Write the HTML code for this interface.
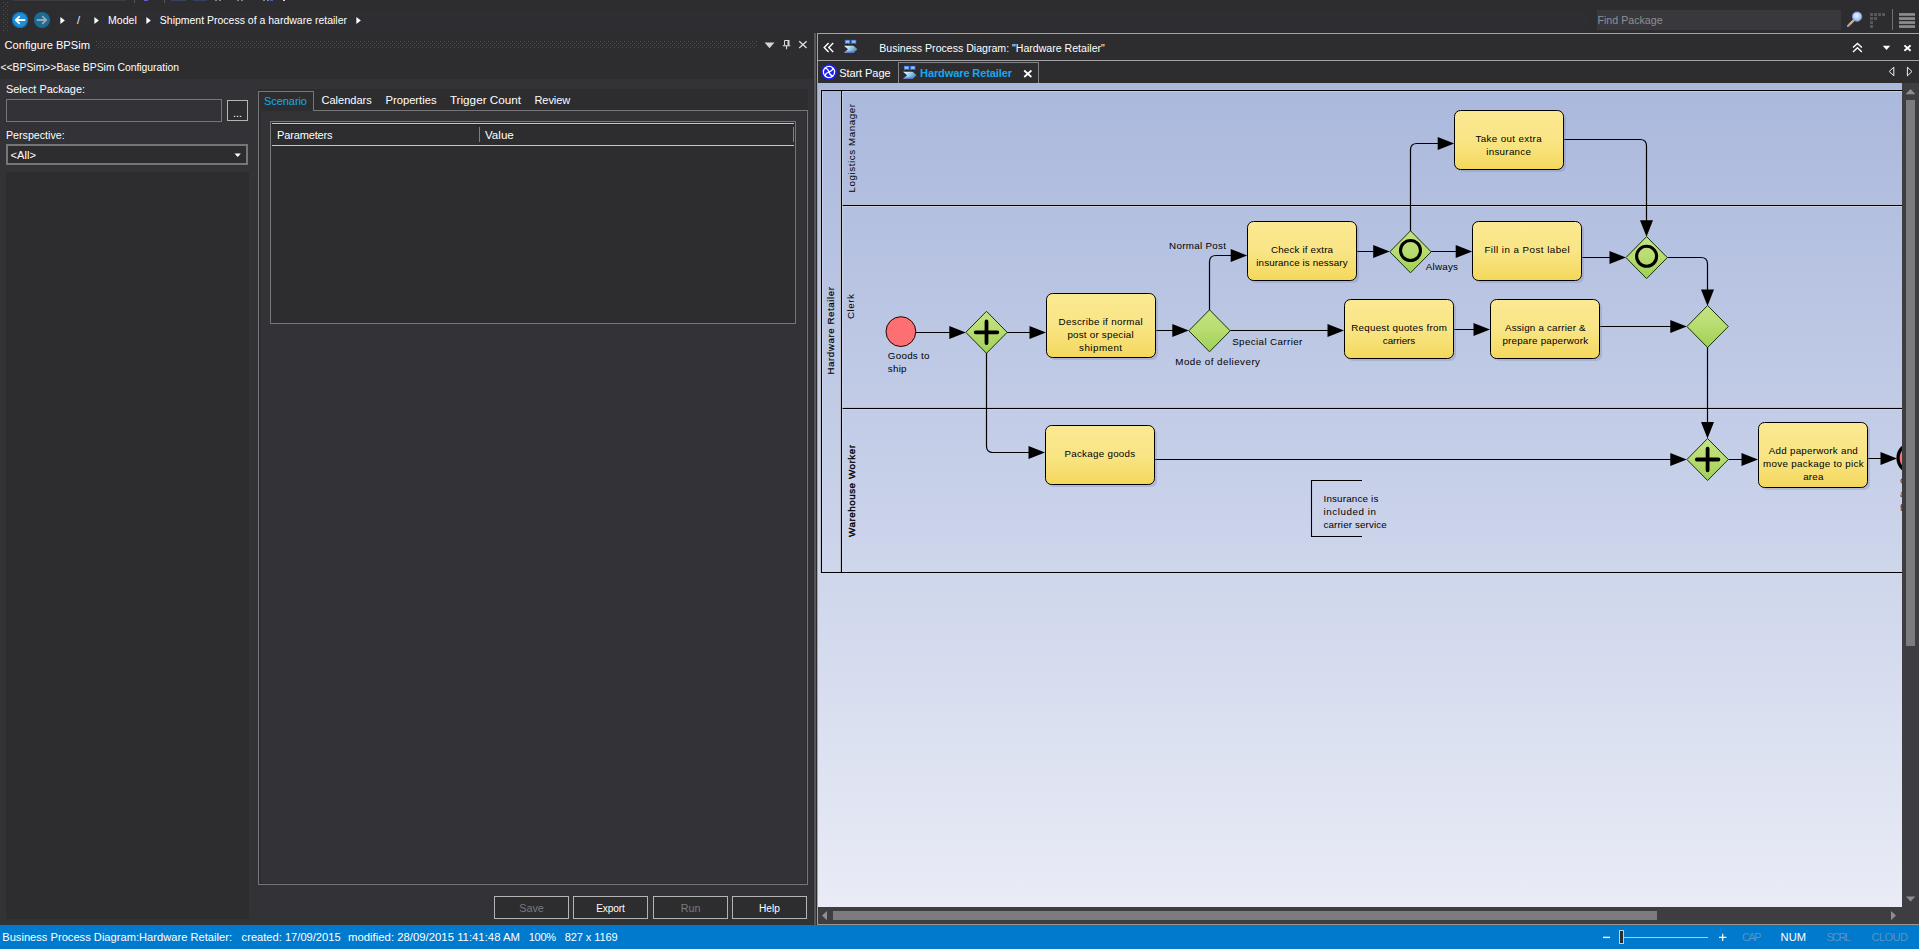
<!DOCTYPE html>
<html><head><meta charset="utf-8"><title>EA</title>
<style>
html,body{margin:0;padding:0}
body{width:1919px;height:949px;overflow:hidden;background:#2d2d30;font-family:"Liberation Sans",sans-serif;position:relative}
.a{position:absolute;box-sizing:border-box}
.t{position:absolute;white-space:pre;font-family:"Liberation Sans",sans-serif}
svg{position:absolute;overflow:hidden}
svg text{font-family:"Liberation Sans",sans-serif}
</style></head><body>
<div class="a" style="left:13px;top:0px;width:113px;height:1px;background:#3c3c40"></div>
<div class="a" style="left:134px;top:0px;width:1px;height:3px;background:#55555a"></div>
<div class="a" style="left:164px;top:0px;width:1px;height:3px;background:#55555a"></div>
<div class="a" style="left:144px;top:0px;width:4px;height:1px;background:#6a5acd"></div>
<div class="a" style="left:171px;top:0px;width:15px;height:1px;background:#36425e"></div>
<div class="a" style="left:193px;top:0px;width:14px;height:1px;background:#36425e"></div>
<div class="a" style="left:215px;top:0px;width:2px;height:1px;background:#85858c"></div>
<div class="a" style="left:219px;top:0px;width:2px;height:1px;background:#85858c"></div>
<div class="a" style="left:237px;top:0px;width:2px;height:1px;background:#85858c"></div>
<div class="a" style="left:241px;top:0px;width:2px;height:1px;background:#85858c"></div>
<div class="a" style="left:263px;top:0px;width:2px;height:1px;background:#85858c"></div>
<div class="a" style="left:267px;top:0px;width:2px;height:1px;background:#85858c"></div>
<div class="a" style="left:270px;top:0px;width:3px;height:1px;background:#3f5fc4"></div>
<div class="a" style="left:283px;top:0px;width:2px;height:1px;background:#ddd"></div>
<svg style="left:3px;top:2px" width="6" height="29"><defs><pattern id="gp" width="4" height="4" patternUnits="userSpaceOnUse"><rect x="0" y="0" width="1" height="1" fill="#4c4c50"/><rect x="2" y="2" width="1" height="1" fill="#4c4c50"/></pattern></defs><rect width="6" height="29" fill="url(#gp)"/></svg>
<svg style="left:10px;top:10px" width="44" height="20" viewBox="10 10 44 20">
<circle cx="20" cy="20" r="8" fill="#1b8fd8"/><circle cx="20" cy="20" r="7.5" fill="none" stroke="#0e6fb0" stroke-width="1"/>
<path d="M24.5 20H16M19.3 16.6L15.8 20l3.5 3.4" fill="none" stroke="#fff" stroke-width="1.8" stroke-linecap="round" stroke-linejoin="round"/>
<circle cx="42" cy="20" r="8" fill="#1c6a96"/>
<path d="M37.5 20H46M42.7 16.6L46.2 20l-3.5 3.4" fill="none" stroke="#9aa7b0" stroke-width="1.8" stroke-linecap="round" stroke-linejoin="round"/>
</svg>
<div class="a" style="left:57px;top:11px;width:1532px;height:19px;background:#2e2e32"></div>
<svg style="left:60.1px;top:16px" width="6" height="9"><path d="M0.4 1L4.8 4.5L0.4 8z" fill="#fff"/></svg>
<svg style="left:94.0px;top:16px" width="6" height="9"><path d="M0.4 1L4.8 4.5L0.4 8z" fill="#fff"/></svg>
<svg style="left:146.1px;top:16px" width="6" height="9"><path d="M0.4 1L4.8 4.5L0.4 8z" fill="#fff"/></svg>
<svg style="left:356.0px;top:16px" width="6" height="9"><path d="M0.4 1L4.8 4.5L0.4 8z" fill="#fff"/></svg>
<div class="a" style="left:1597px;top:10px;width:244px;height:20px;background:#38383d"></div>
<svg style="left:1844px;top:8px" width="74" height="24" viewBox="1844 8 74 24">
<defs><linearGradient id="hG" x1="0" y1="1" x2="1" y2="0"><stop offset="0" stop-color="#9c8cd0"/><stop offset="0.5" stop-color="#d2b282"/><stop offset="1" stop-color="#caa870"/></linearGradient>
<radialGradient id="lG" cx="0.45" cy="0.4" r="0.6"><stop offset="0" stop-color="#eaf4ff"/><stop offset="0.7" stop-color="#a9c8f4"/><stop offset="1" stop-color="#8f9fe8"/></radialGradient></defs>
<path d="M1848 26L1853.8 20.2" stroke="url(#hG)" stroke-width="2.4" stroke-linecap="round"/>
<circle cx="1857.1" cy="16.6" r="4.7" fill="url(#lG)" stroke="#8c94e0" stroke-width="0.8"/>
<g fill="#55555a"><rect x="1870" y="13" width="3" height="3"/><rect x="1874" y="13" width="3" height="3"/><rect x="1878" y="13" width="3" height="3"/><rect x="1882" y="13" width="3" height="3"/><rect x="1870" y="17" width="3" height="3"/><rect x="1874" y="17" width="3" height="3"/><rect x="1870" y="21" width="3" height="3"/><rect x="1870" y="25" width="3" height="3"/></g>
<rect x="1892" y="9" width="1" height="21" fill="#707074"/>
<g fill="#8c8c8e"><rect x="1899" y="13.1" width="16" height="2.7"/><rect x="1899" y="17.2" width="16" height="2.7"/><rect x="1899" y="21.2" width="16" height="2.7"/><rect x="1899" y="25.2" width="16" height="2.7"/></g>
</svg>
<svg style="left:96px;top:41px" width="662" height="7"><defs><pattern id="gp2" width="4" height="4" patternUnits="userSpaceOnUse"><rect x="0" y="0" width="1" height="1" fill="#505055"/><rect x="2" y="2" width="1" height="1" fill="#505055"/></pattern></defs><rect width="662" height="7" fill="url(#gp2)"/></svg>
<svg style="left:760px;top:36px" width="52" height="18" viewBox="760 36 52 18">
<path d="M764.6 42.6h9.8l-4.9 5.6z" fill="#d4d4d4"/>
<path d="M784.5 45.3V40.5H789" stroke="#d8d8d8" stroke-width="1" fill="none"/><rect x="787.5" y="40" width="2" height="5.4" fill="#d8d8d8"/>
<rect x="782.8" y="45.2" width="7.4" height="1.1" fill="#d8d8d8"/><rect x="786" y="46" width="1.1" height="3.2" fill="#d8d8d8"/>
<path d="M799.2 41.2l7.4 6.8M806.6 41.2l-7.4 6.8" stroke="#dcdcdc" stroke-width="1.35" fill="none"/>
</svg>
<div class="a" style="left:0px;top:79px;width:813px;height:846px;background:#333337"></div>
<div class="a" style="left:6px;top:99px;width:216px;height:23px;background:#333337;border:1px solid #767679"></div>
<div class="a" style="left:227px;top:100px;width:21px;height:21px;background:#2d2d30;border:1px solid #b4b4b6"></div>
<div class="a" style="left:6px;top:144px;width:242px;height:21px;background:#2d2d30;border:2px solid #767679"></div>
<svg style="left:234.3px;top:152.8px" width="8" height="5"><path d="M0.5 0.5h6.4l-3.2 3.4z" fill="#fff"/></svg>
<div class="a" style="left:6px;top:172px;width:243px;height:747px;background:#2d2d30"></div>
<div class="a" style="left:258px;top:89px;width:550px;height:22px;background:#2d2d30"></div>
<div class="a" style="left:258px;top:110px;width:550px;height:775px;background:#2d2d30;border:1px solid #767679"></div>
<div class="a" style="left:261px;top:111px;width:545px;height:772px;background:#333337"></div>
<div class="a" style="left:258px;top:91px;width:56px;height:20px;background:#2d2d30;border:1px solid #767679;border-bottom:none"></div>
<div class="a" style="left:259px;top:110px;width:54px;height:1px;background:#2d2d30"></div>
<div class="a" style="left:270px;top:121px;width:526px;height:203px;background:#2d2d30;border:1px solid #767679"></div>
<div class="a" style="left:272px;top:123px;width:522px;height:1px;background:#c6c6c8"></div>
<div class="a" style="left:272px;top:124px;width:522px;height:1px;background:#262628"></div>
<div class="a" style="left:272px;top:145px;width:522px;height:1px;background:#c6c6c8"></div>
<div class="a" style="left:479px;top:127px;width:1px;height:15px;background:#808084"></div>
<div class="a" style="left:793px;top:127px;width:1px;height:15px;background:#808084"></div>
<div class="a" style="left:494px;top:896px;width:75px;height:23px;background:#2d2d30;border:1px solid #b4b4b6"></div>
<div class="a" style="left:573px;top:896px;width:75px;height:23px;background:#2d2d30;border:1px solid #b4b4b6"></div>
<div class="a" style="left:653px;top:896px;width:75px;height:23px;background:#2d2d30;border:1px solid #b4b4b6"></div>
<div class="a" style="left:732px;top:896px;width:75px;height:23px;background:#2d2d30;border:1px solid #b4b4b6"></div>
<div class="a" style="left:814px;top:33px;width:2px;height:892px;background:#58585c"></div>
<div class="a" style="left:817px;top:33px;width:1102px;height:892px;background:#2d2d30;border-left:1px solid #a4a4a6;border-top:1px solid #a4a4a6"></div>
<div class="a" style="left:818px;top:60px;width:1101px;height:1px;background:#a4a4a6"></div>
<svg style="left:820px;top:38px" width="44" height="20" viewBox="820 38 44 20">
<defs><linearGradient id="icG" x1="0" y1="0" x2="1" y2="0.5"><stop offset="0" stop-color="#ffffff"/><stop offset="0.45" stop-color="#a8dcf4"/><stop offset="1" stop-color="#4f8fb8"/></linearGradient></defs>
<path d="M828.6 43l-4.4 4.55 4.4 4.55M833.2 43l-4.4 4.55 4.4 4.55" fill="none" stroke="#fff" stroke-width="1.4"/>
<g id="dicon"><rect x="844.9" y="39.9" width="5.3" height="3.8" fill="#4f86ee"/><rect x="851.2" y="39.9" width="5" height="3.8" fill="#4f86ee"/><rect x="846" y="40.9" width="3" height="1.8" fill="#9fd0f8"/><rect x="852.2" y="40.9" width="3" height="1.8" fill="#9fd0f8"/>
<rect x="847" y="43.7" width="1" height="2" fill="#1c1c30"/><rect x="853.2" y="43.7" width="1" height="2" fill="#1c1c30"/>
<path d="M844 45.7H853.6L857.4 49.2L853.6 52.7H844L848 49.2z" fill="url(#icG)"/><path d="M844 52.7H853.6L855 51.4H846z" fill="#6a6ad8"/></g>
</svg>
<svg style="left:1845px;top:38px" width="72" height="42" viewBox="1845 38 72 42">
<path d="M1853 47.6l4.45-4.2 4.45 4.2M1853 52l4.45-4.2 4.45 4.2" fill="none" stroke="#fff" stroke-width="1.4"/>
<path d="M1882.8 45.7h7.4l-3.7 4.3z" fill="#fff"/>
<path d="M1904.4 45.4l6.2 5.4M1910.6 45.4l-6.2 5.4" stroke="#fff" stroke-width="1.9"/>
<path d="M1893.8 67.2l-4.6 4.3 4.6 4.3z" fill="none" stroke="#f0f0f0" stroke-width="1"/>
<path d="M1907.4 67.2l4.6 4.3-4.6 4.3z" fill="none" stroke="#f0f0f0" stroke-width="1"/>
</svg>
<div class="a" style="left:898px;top:62px;width:141px;height:21px;background:#2d2d30;border:1px solid #848488;border-bottom:none"></div>
<svg style="left:820px;top:63px" width="100" height="19" viewBox="820 63 100 19">
<circle cx="829" cy="72" r="8" fill="#1c1cf4"/>
<g fill="none" stroke="#fff" stroke-width="1.25"><circle cx="829" cy="72" r="5.6"/>
<path d="M825 68c2.5 0.5 3.5 2 4 4s1.500 3.500 4 4M833 68c-0.500 2.500-2 3.500-4 4s-3.500 1.500-4 4"/></g>
<g transform="translate(59.1 26)"><g><rect x="844.9" y="39.9" width="5.3" height="3.8" fill="#4f86ee"/><rect x="851.2" y="39.9" width="5" height="3.8" fill="#4f86ee"/><rect x="846" y="40.9" width="3" height="1.8" fill="#9fd0f8"/><rect x="852.2" y="40.9" width="3" height="1.8" fill="#9fd0f8"/>
<rect x="847" y="43.7" width="1" height="2" fill="#1c1c30"/><rect x="853.2" y="43.7" width="1" height="2" fill="#1c1c30"/>
<path d="M844 45.7H853.6L857.4 49.2L853.6 52.7H844L848 49.2z" fill="url(#icG)"/><path d="M844 52.7H853.6L855 51.4H846z" fill="#6a6ad8"/></g></g>
</svg>
<svg style="left:1022px;top:68px" width="12" height="12" viewBox="0 0 12 12"><path d="M2.2 2.5l7.2 6.500M9.4 2.5L2.2 9" stroke="#fff" stroke-width="1.7"/></svg>
<div class="a" style="left:1902px;top:83px;width:17px;height:824px;background:#3e3e42"></div>
<div class="a" style="left:1906px;top:100px;width:9px;height:546px;background:#7c7c7e"></div>
<div class="a" style="left:818px;top:907px;width:1101px;height:18px;background:#3e3e42"></div>
<div class="a" style="left:833px;top:911px;width:824px;height:9px;background:#7c7c7e"></div>
<svg style="left:818px;top:82px" width="1101" height="843" viewBox="818 82 1101 843">
<path d="M1905.6 94.2l4.9-5.200 4.9 5.200z" fill="#8e8e90"/><path d="M1906 896.5l4.6 5 4.6-5z" fill="#8e8e90"/>
<path d="M827 911l-5 4.6 5 4.6z" fill="#8e8e90"/><path d="M1891 911l5 4.6-5 4.6z" fill="#8e8e90"/>
</svg>
<div class="a" style="left:0px;top:925px;width:1919px;height:24px;background:#007acc"></div>
<div class="a" style="left:817px;top:924px;width:1102px;height:1px;background:#a09488"></div>
<svg style="left:1600px;top:927px" width="130" height="20" viewBox="1600 927 130 20">
<rect x="1603" y="936.7" width="7" height="1.4" fill="#fff"/>
<rect x="1624" y="937" width="84" height="1" fill="#cfc6bc"/>
<rect x="1619.500" y="930.5" width="4" height="13" fill="#2d2d30" stroke="#d6c8ba" stroke-width="1"/>
<path d="M1719 937.4h7.4M1722.7 933.7v7.4" stroke="#fff" stroke-width="1.2"/>
</svg>
<svg style="left:818px;top:83px" width="1084" height="824" viewBox="818 83 1084 824">
<defs>
<linearGradient id="bgG" x1="0" y1="0" x2="0" y2="1"><stop offset="0" stop-color="#aab8dc"/><stop offset="0.5" stop-color="#c8d1e9"/><stop offset="1" stop-color="#e9ecf6"/></linearGradient>
<linearGradient id="tG" x1="0" y1="0" x2="0" y2="1"><stop offset="0" stop-color="#fbe992"/><stop offset="0.5" stop-color="#f9e586"/><stop offset="1" stop-color="#f4d85c"/></linearGradient>
<linearGradient id="gG" x1="0" y1="0" x2="0" y2="1"><stop offset="0" stop-color="#c4e283"/><stop offset="0.45" stop-color="#b9dd72"/><stop offset="1" stop-color="#9fd055"/></linearGradient>
</defs>
<rect x="818" y="83" width="1085" height="824" fill="url(#bgG)"/>
<g fill="none" stroke="#bebec2" stroke-width="1" shape-rendering="crispEdges"><path d="M820.5 90V573M840.5 90V572M820 89.5H1910M841 204.5H1910M841 407.5H1910"/></g>
<g fill="none" stroke="#000" stroke-width="1" shape-rendering="crispEdges"><path d="M1910 90.5H821.5V572.5H1910"/><path d="M841.5 90V573"/><path d="M840.5 205.5H1910M840.5 408.5H1910"/></g>
<g fill="none" stroke="#cfdaf6" stroke-width="1" shape-rendering="crispEdges" opacity="0.6"><path d="M822.5 91V572M842.5 91V572M842 91.5H1910M842 206.5H1910M842 409.5H1910M821 573.5H1910"/></g>
<text transform="translate(834.3 374.5) rotate(-90)" font-size="9.8" font-weight="400" stroke="#000" stroke-width="0.15" textLength="87.5" lengthAdjust="spacing" fill="#000">Hardware Retailer</text>
<text transform="translate(854.7 192.4) rotate(-90)" font-size="9.8" font-weight="400" textLength="88.4" lengthAdjust="spacing" fill="#000">Logistics Manager</text>
<text transform="translate(854.3 319.0) rotate(-90)" font-size="9.8" font-weight="400" textLength="25.0" lengthAdjust="spacing" fill="#000">Clerk</text>
<text transform="translate(854.6 537.0) rotate(-90)" font-size="9.8" font-weight="400" stroke="#000" stroke-width="0.35" textLength="92.0" lengthAdjust="spacing" fill="#000">Warehouse Worker</text>
<path d="M916 332.5H950.3M1007 332.5H1030.5M1156 330.5H1173.3M1230.2 330.5H1328.5M1357 251.5H1374.2M1431 251.5H1456.7M1582 257.5H1610.5M1454 329.5H1474.5M1600 326.5H1671.3M1155 459.5H1671.3M1728.5 459.5H1742.5M1868 458.5H1881.5M1209.5 310V262.0Q1209.5 255.5 1216.0 255.5H1231.7M1410.5 231V150.0Q1410.5 143.5 1417.0 143.5H1438.7M986.5 353V446.0Q986.5 452.5 993.0 452.5H1029.5M1564 139.5H1640.0Q1646.5 139.5 1646.5 146.0V221.3M1667.3 257.5H1701.0Q1707.5 257.5 1707.5 264.0V290.5M1707.5 347V423.1" fill="none" stroke="#000" stroke-width="1.2"/>
<path d="M965.8 332.5L949.3 326.0V339.0zM1046 332.5L1029.5 326.0V339.0zM1188.8 330.5L1172.3 324.0V337.0zM1344 330.5L1327.5 324.0V337.0zM1389.7 251.5L1373.2 245.0V258.0zM1472.2 251.5L1455.7 245.0V258.0zM1626 257.5L1609.5 251.0V264.0zM1490 329.5L1473.5 323.0V336.0zM1686.8 326.5L1670.3 320.0V333.0zM1686.8 459.5L1670.3 453.0V466.0zM1758 459.5L1741.5 453.0V466.0zM1897 458.5L1880.5 452.0V465.0zM1247.2 255.5L1230.7 249.0V262.0zM1454.2 143.5L1437.7 137.0V150.0zM1045 452.5L1028.5 446.0V459.0zM1646.5 236.8L1640.0 220.3H1653.0zM1707.5 306L1701.0 289.5H1714.0zM1707.5 438.6L1701.0 422.1H1714.0z" fill="#000"/>
<rect x="1457" y="113" width="109" height="59" rx="6" fill="#7c84a6" opacity="0.30"/>
<rect x="1454.5" y="110.5" width="109" height="59" rx="6" fill="url(#tG)" stroke="#000" stroke-width="1"/>
<text x="1475.4" y="142.0" font-size="9.8" fill="#000" textLength="66.3" lengthAdjust="spacing">Take out extra</text>
<text x="1486.2" y="155.0" font-size="9.8" fill="#000" textLength="44.8" lengthAdjust="spacing">insurance</text>
<rect x="1250" y="224" width="109" height="59" rx="6" fill="#7c84a6" opacity="0.30"/>
<rect x="1247.5" y="221.5" width="109" height="59" rx="6" fill="url(#tG)" stroke="#000" stroke-width="1"/>
<text x="1271.0" y="253.0" font-size="9.8" fill="#000" textLength="62" lengthAdjust="spacing">Check if extra</text>
<text x="1256.3" y="266.0" font-size="9.8" fill="#000" textLength="91.3" lengthAdjust="spacing">insurance is nessary</text>
<rect x="1475" y="224" width="109" height="59" rx="6" fill="#7c84a6" opacity="0.30"/>
<rect x="1472.5" y="221.5" width="109" height="59" rx="6" fill="url(#tG)" stroke="#000" stroke-width="1"/>
<text x="1484.4" y="253.0" font-size="9.8" fill="#000" textLength="85.2" lengthAdjust="spacing">Fill in a Post label</text>
<rect x="1049" y="296" width="109" height="64" rx="6" fill="#7c84a6" opacity="0.30"/>
<rect x="1046.5" y="293.5" width="109" height="64" rx="6" fill="url(#tG)" stroke="#000" stroke-width="1"/>
<text x="1058.6" y="325.0" font-size="9.8" fill="#000" textLength="84" lengthAdjust="spacing">Describe if normal</text>
<text x="1067.4" y="338.0" font-size="9.8" fill="#000" textLength="66.3" lengthAdjust="spacing">post or special</text>
<text x="1079.1" y="351.0" font-size="9.8" fill="#000" textLength="43" lengthAdjust="spacing">shipment</text>
<rect x="1347" y="302" width="109" height="59" rx="6" fill="#7c84a6" opacity="0.30"/>
<rect x="1344.5" y="299.5" width="109" height="59" rx="6" fill="url(#tG)" stroke="#000" stroke-width="1"/>
<text x="1351.2" y="331.0" font-size="9.8" fill="#000" textLength="95.6" lengthAdjust="spacing">Request quotes from</text>
<text x="1382.8" y="344.0" font-size="9.8" fill="#000" textLength="32.4" lengthAdjust="spacing">carriers</text>
<rect x="1493" y="302" width="109" height="59" rx="6" fill="#7c84a6" opacity="0.30"/>
<rect x="1490.5" y="299.5" width="109" height="59" rx="6" fill="url(#tG)" stroke="#000" stroke-width="1"/>
<text x="1504.9" y="331.0" font-size="9.8" fill="#000" textLength="80.7" lengthAdjust="spacing">Assign a carrier &amp;</text>
<text x="1502.4" y="344.0" font-size="9.8" fill="#000" textLength="85.7" lengthAdjust="spacing">prepare paperwork</text>
<rect x="1048" y="428" width="109" height="59" rx="6" fill="#7c84a6" opacity="0.30"/>
<rect x="1045.5" y="425.5" width="109" height="59" rx="6" fill="url(#tG)" stroke="#000" stroke-width="1"/>
<text x="1064.4" y="457.0" font-size="9.8" fill="#000" textLength="70.8" lengthAdjust="spacing">Package goods</text>
<rect x="1761" y="425" width="109" height="65" rx="6" fill="#7c84a6" opacity="0.30"/>
<rect x="1758.5" y="422.5" width="109" height="65" rx="6" fill="url(#tG)" stroke="#000" stroke-width="1"/>
<text x="1768.8" y="454.0" font-size="9.8" fill="#000" textLength="89" lengthAdjust="spacing">Add paperwork and</text>
<text x="1763.0" y="467.0" font-size="9.8" fill="#000" textLength="100.7" lengthAdjust="spacing">move package to pick</text>
<text x="1803.2" y="480.0" font-size="9.8" fill="#000" textLength="20.2" lengthAdjust="spacing">area</text>
<path d="M986.5 311.3L1007.2 332.3L986.5 353.3L965.8 332.3z" fill="url(#gG)" stroke="#16300a" stroke-width="1"/>
<path d="M975.7 332.3H997.3M986.5 321.5V343.1" stroke="#000" stroke-width="3.8" stroke-linecap="round"/>
<path d="M1209.5 309.8L1230.2 330.8L1209.5 351.8L1188.8 330.8z" fill="url(#gG)" stroke="#16300a" stroke-width="1"/>
<path d="M1410.5 230.8L1431.2 251.8L1410.5 272.8L1389.8 251.8z" fill="url(#gG)" stroke="#16300a" stroke-width="1"/>
<circle cx="1410.5" cy="250.5" r="10" fill="none" stroke="#000" stroke-width="3.1"/>
<path d="M1646.6 236.60000000000002L1667.3 257.6L1646.6 278.6L1625.8999999999999 257.6z" fill="url(#gG)" stroke="#16300a" stroke-width="1"/>
<circle cx="1646.6" cy="256.3" r="10" fill="none" stroke="#000" stroke-width="3.1"/>
<path d="M1707.6 305.5L1728.3 326.5L1707.6 347.5L1686.8999999999999 326.5z" fill="url(#gG)" stroke="#16300a" stroke-width="1"/>
<path d="M1707.6 438.5L1728.3 459.5L1707.6 480.5L1686.8999999999999 459.5z" fill="url(#gG)" stroke="#16300a" stroke-width="1"/>
<path d="M1696.8 459.5H1718.3999999999999M1707.6 448.7V470.3" stroke="#000" stroke-width="3.8" stroke-linecap="round"/>
<circle cx="900.9" cy="331.6" r="14.9" fill="#fd6f70" stroke="#1a0505" stroke-width="1"/>
<circle cx="1912.6" cy="458" r="14.6" fill="#fd6f70" stroke="#000" stroke-width="3.2"/>
<text x="887.8" y="358.9" font-size="9.8" fill="#000" textLength="41.7" lengthAdjust="spacing">Goods to</text>
<text x="887.8" y="372.1" font-size="9.8" fill="#000" textLength="18.7" lengthAdjust="spacing">ship</text>
<text x="1169.0" y="248.9" font-size="9.8" fill="#000" textLength="57.0" lengthAdjust="spacing">Normal Post</text>
<text x="1232.2" y="345.0" font-size="9.8" fill="#000" textLength="70.1" lengthAdjust="spacing">Special Carrier</text>
<text x="1175.3" y="365.3" font-size="9.8" fill="#000" textLength="84.7" lengthAdjust="spacing">Mode of delievery</text>
<text x="1425.8" y="270.4" font-size="9.8" fill="#000" textLength="32.2" lengthAdjust="spacing">Always</text>
<text x="1323.5" y="502.0" font-size="9.8" fill="#000" textLength="54.8" lengthAdjust="spacing">Insurance is</text>
<text x="1323.5" y="515.2" font-size="9.8" fill="#000" textLength="52.5" lengthAdjust="spacing">included in</text>
<text x="1323.5" y="528.4" font-size="9.8" fill="#000" textLength="63.2" lengthAdjust="spacing">carrier service</text>
<text x="1900.0" y="483.8" font-size="9.8" fill="#1b2f66">Goods</text>
<text x="1900.0" y="497.4" font-size="9.8" fill="#1b2f66">available</text>
<text x="1900.0" y="511.4" font-size="9.8" fill="#1b2f66">for pick</text>
<path d="M1362 480.5H1311.5V536.5H1362" fill="none" stroke="#000" stroke-width="1.1"/>
</svg>
<svg style="left:0;top:0;pointer-events:none" width="1919" height="949" viewBox="0 0 1919 949">
<text x="77.00" y="23.94" fill="#f0f0f0" font-size="11.00">/</text>
<text x="108.00" y="23.94" fill="#fff" textLength="28.80" lengthAdjust="spacing" font-size="10.57">Model</text>
<text x="159.80" y="23.94" fill="#fff" textLength="187.20" lengthAdjust="spacing" font-size="10.49">Shipment Process of a hardware retailer</text>
<text x="1597.50" y="23.94" fill="#8f8f94" textLength="65.10" lengthAdjust="spacing" font-size="10.65">Find Package</text>
<text x="4.50" y="48.60" fill="#fff" textLength="85.50" lengthAdjust="spacing" font-size="11.15">Configure BPSim</text>
<text x="0.50" y="71.34" fill="#fff" textLength="178.50" lengthAdjust="spacing" font-size="10.36">&lt;&lt;BPSim&gt;&gt;Base BPSim Configuration</text>
<text x="6.00" y="92.94" fill="#fff" textLength="79.00" lengthAdjust="spacing" font-size="10.93">Select Package:</text>
<text x="233.00" y="116.94" fill="#fff" font-size="11.00">...</text>
<text x="6.00" y="139.24" fill="#fff" textLength="58.60" lengthAdjust="spacing" font-size="10.65">Perspective:</text>
<text x="10.60" y="159.14" fill="#fff" textLength="25.40" lengthAdjust="spacing" font-size="11.14">&lt;All&gt;</text>
<text x="264.00" y="105.30" fill="#14a8f4" textLength="43.00" lengthAdjust="spacing" font-size="11.04">Scenario</text>
<text x="321.50" y="104.30" fill="#fff" textLength="50.20" lengthAdjust="spacing" font-size="11.04">Calendars</text>
<text x="385.40" y="104.30" fill="#fff" textLength="51.20" lengthAdjust="spacing" font-size="11.23">Properties</text>
<text x="449.90" y="104.30" fill="#fff" textLength="71.10" lengthAdjust="spacing" font-size="11.70">Trigger Count</text>
<text x="534.40" y="104.30" fill="#fff" textLength="35.90" lengthAdjust="spacing" font-size="11.04">Review</text>
<text x="277.00" y="139.30" fill="#fff" textLength="55.60" lengthAdjust="spacing" font-size="11.04">Parameters</text>
<text x="485.00" y="139.30" fill="#fff" textLength="28.80" lengthAdjust="spacing" font-size="11.59">Value</text>
<text x="519.25" y="911.64" fill="#7a7a7e" textLength="24.50" lengthAdjust="spacing" font-size="10.75">Save</text>
<text x="596.25" y="911.64" fill="#fff" textLength="28.50" lengthAdjust="spacing" font-size="10.12">Export</text>
<text x="680.65" y="911.64" fill="#7a7a7e" textLength="19.70" lengthAdjust="spacing" font-size="10.73">Run</text>
<text x="759.00" y="911.64" fill="#fff" textLength="21.00" lengthAdjust="spacing" font-size="10.21">Help</text>
<text x="879.20" y="51.94" fill="#fff" textLength="225.60" lengthAdjust="spacing" font-size="10.58">Business Process Diagram: &quot;Hardware Retailer&quot;</text>
<text x="839.20" y="77.30" fill="#fff" textLength="51.40" lengthAdjust="spacing" font-size="11.04">Start Page</text>
<text x="920.10" y="77.30" fill="#14a8f4" textLength="91.90" lengthAdjust="spacing" font-size="11.04" font-weight="700">Hardware Retailer</text>
<text x="2.20" y="941.30" fill="#fff" textLength="229.80" lengthAdjust="spacing" font-size="11.14">Business Process Diagram:Hardware Retailer:</text>
<text x="241.60" y="941.30" fill="#fff" textLength="99.00" lengthAdjust="spacing" font-size="11.13">created: 17/09/2015</text>
<text x="348.00" y="941.30" fill="#fff" textLength="172.00" lengthAdjust="spacing" font-size="11.35">modified: 28/09/2015 11:41:48 AM</text>
<text x="528.80" y="941.30" fill="#fff" textLength="27.20" lengthAdjust="spacing" font-size="11.04">100%</text>
<text x="564.70" y="941.30" fill="#fff" textLength="52.90" lengthAdjust="spacing" font-size="11.04">827 x 1169</text>
<text x="1742.00" y="941.30" fill="#5a92c4" textLength="19.40" lengthAdjust="spacing" font-size="11.04">CAP</text>
<text x="1780.60" y="941.30" fill="#fff" textLength="25.40" lengthAdjust="spacing" font-size="11.15">NUM</text>
<text x="1826.40" y="941.30" fill="#5a92c4" textLength="24.50" lengthAdjust="spacing" font-size="11.04">SCRL</text>
<text x="1871.60" y="941.30" fill="#5a92c4" textLength="36.30" lengthAdjust="spacing" font-size="11.04">CLOUD</text>
</svg>
</body></html>
